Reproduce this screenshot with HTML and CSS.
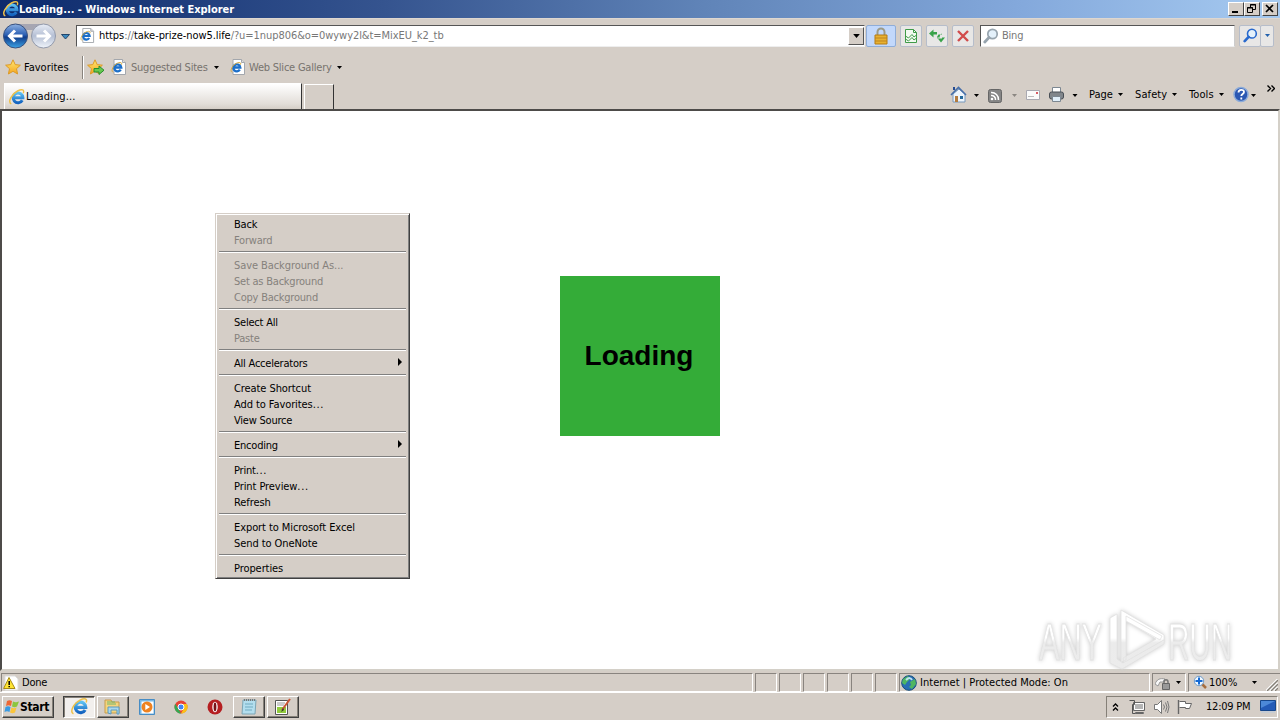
FILE: index.html
```html
<!DOCTYPE html>
<html lang="en">
<head>
<meta charset="utf-8">
<title>Loading... - Windows Internet Explorer</title>
<link rel="stylesheet" href="styles.css">
</head>
<body>
<svg class="sprite" width="0" height="0">
  <defs>
    <linearGradient id="blueBall" x1="0" y1="0" x2="0" y2="1"><stop offset="0" stop-color="#8fb2e2"/><stop offset=".45" stop-color="#2c60b4"/><stop offset=".55" stop-color="#103d8c"/><stop offset="1" stop-color="#3ca4e6"/></linearGradient>
    <linearGradient id="greyBall" x1="0" y1="0" x2="0" y2="1"><stop offset="0" stop-color="#e8edf6"/><stop offset=".5" stop-color="#b5bfd4"/><stop offset="1" stop-color="#f1f5fb"/></linearGradient>
    <linearGradient id="eBlue" x1="0" y1="0" x2="0" y2="1"><stop offset="0" stop-color="#5cc0f2"/><stop offset="1" stop-color="#1463c0"/></linearGradient>
    <linearGradient id="gold" x1="0" y1="0" x2="0" y2="1"><stop offset="0" stop-color="#ffe873"/><stop offset="1" stop-color="#f5a51d"/></linearGradient>
    <linearGradient id="mark" gradientUnits="userSpaceOnUse" x1="0" y1="612" x2="0" y2="670"><stop offset=".45" stop-color="#fff"/><stop offset=".53" stop-color="#ebebeb"/><stop offset="1" stop-color="#ececec"/></linearGradient>
  </defs>
  <symbol id="ie" viewBox="0 0 16 16">
    <path d="M13.300 11.200A4.900 4.900 0 1 1 13.900 8.800H5.500" fill="none" stroke="url(#eBlue)" stroke-width="3"/>
    <path d="M2.300 15C-1.500 13 2.500 5 8.500 2c4.500-2.200 7.300-1.300 5.700 2.200" fill="none" stroke="#edc04a" stroke-width="1.400"/>
  </symbol>
  <symbol id="iepage" viewBox="0 0 16 16">
    <path d="M3 .5h8.500l3 3v12H3z" fill="#fff" stroke="#a3a7ad"/><path d="M11.500.5v3h3" fill="#ddd" stroke="#a3a7ad"/>
    <path d="M9.800 10.700A3.500 3.500 0 1 1 10.300 8.500H4.500" fill="none" stroke="#1c6fc9" stroke-width="2.300"/>
    <path d="M2 13.300C-.5 11.500 2.500 6 6.500 4.200c3-1.200 5-.8 4 1.500" fill="none" stroke="#d8a93c"/>
  </symbol>
  <symbol id="star" viewBox="0 0 16 16"><path d="M8 .8l2.200 4.800 5.200.6-3.900 3.500 1.100 5.300L8 12.300 3.400 15l1.100-5.300L.6 6.200l5.200-.6z" fill="url(#gold)" stroke="#dc9a28"/></symbol>
  <symbol id="glass" viewBox="0 0 16 16"><circle cx="9.500" cy="6" r="4.700" fill="#e4f1fb" stroke="currentColor" stroke-width="1.700"/><path d="M6 9.500L1.800 14" stroke="currentColor" stroke-width="2.800" stroke-linecap="round"/></symbol>
  <symbol id="down" viewBox="0 0 5 3"><path d="M0 0h5L2.500 3z" fill="currentColor"/></symbol>
</svg>

<header class="titlebar">
  <svg class="i16"><use href="#ie"/></svg><span class="title">Loading... - Windows Internet Explorer</span>
  <div class="winbtns">
    <span class="wb"><svg width="14" height="12"><path d="M3 9h6" stroke="#000" stroke-width="2"/></svg></span>
    <span class="wb"><svg width="14" height="12"><path d="M5.500 4V1.500h5v5H8M5 2h6M2.500 4.500h5v5h-5zM2 5h6" fill="none" stroke="#000"/></svg></span>
    <span class="wb last"><svg width="14" height="12"><path d="M3 2l7 7M10 2L3 9" stroke="#000" stroke-width="1.700"/></svg></span>
  </div>
</header>

<nav class="navrow">
  <svg class="travel" width="76" height="34" viewBox="0 18 76 34">
    <path d="M12 23h34l7 4-6 2H12z" fill="#a6a6b2"/>
    <circle cx="15.500" cy="35" r="12" fill="url(#blueBall)" stroke="#38517f"/><circle cx="43.500" cy="35" r="12" fill="url(#greyBall)" stroke="#9299aa"/>
    <path d="M22.500 35H10M15 29.500L9.500 35l5.500 5.500" fill="none" stroke="#fff" stroke-width="3"/>
    <path d="M36.500 35H49M44 29.500L49.500 35 44 40.500" fill="none" stroke="#fff" stroke-width="3"/>
    <path d="M61.500 33.500h8l-4 4.500z" fill="#3b8ac0" stroke="#23466c"/>
  </svg>
  <div class="address"><svg class="i15"><use href="#iepage"/></svg><span class="url">https<i>://</i>take-prize-now5.life<i>/?u=1nup806&amp;o=0wywy2l&amp;t=MixEU_k2_tb</i></span><span class="combo"><svg width="7" height="4"><use href="#down"/></svg></span></div>
  <span class="tool lock"><svg width="16" height="18" viewBox="0 0 16 18"><path d="M4.500 9V5a3.500 3.500 0 0 1 7 0v4" fill="none" stroke="#9c9a87" stroke-width="2"/><path d="M2 8h12v9H2z" fill="#e8b131" stroke="#b57b13"/><path d="M2 11h12M2 14h12" stroke="#bd8420"/></svg></span>
  <span class="tool"><svg width="14" height="16" viewBox="0 0 14 16"><path d="M1.500 14.500v-13h8l3 3v10z" fill="#f2faf1" stroke="#3f9b48"/><path d="M9.500 1.500v3h3M1.500 8l3 2L8 6.500l2 2.500 2.500-2M1.500 11l3 2L8 9.500l2 2.500 2.500-2" fill="none" stroke="#3f9b48"/></svg></span>
  <span class="tool"><svg width="16" height="16" viewBox="0 0 16 16"><path d="M0 5.500L4.500 1.500V4H8v2.500H4.500v3zM16 10.500h-3V6.500H9.500L8 9v1.500h0M16 9.500L12 14.500 8 9.500h2.700c0-2 .3-3 2.300-4v4z" fill="#39a34a"/></svg></span>
  <span class="tool"><svg width="14" height="14" viewBox="0 0 14 14"><path d="M2 2l10 10M12 2L2 12" stroke="#d14b4b" stroke-width="2.400"/></svg></span>
  <div class="search"><svg class="i16 lens"><use href="#glass"/></svg><span>Bing</span></div>
  <span class="tool go"><svg class="i15"><use href="#glass"/></svg></span><span class="tool godrop"><svg width="5" height="3"><use href="#down"/></svg></span>
</nav>

<div class="favrow">
  <svg class="i16"><use href="#star"/></svg><span class="favlabel">Favorites</span><i class="vline"></i>
  <svg class="addfav" width="18" height="17" viewBox="0 0 18 17"><use href="#star" width="16" height="16"/><path d="M7 9.500h5V7l5 4.200-5 4.300V13H7z" fill="#67c84f" stroke="#278d2c"/></svg>
  <svg class="i16 pg1"><use href="#iepage"/></svg><span class="sug">Suggested Sites</span><svg class="arr"><use href="#down"/></svg>
  <svg class="i16 pg2"><use href="#iepage"/></svg><span class="web">Web Slice Gallery</span><svg class="arr"><use href="#down"/></svg>
</div>

<div class="tabrow">
  <div class="tab"><svg class="i16"><use href="#ie"/></svg><span>Loading...</span></div><div class="newtab"></div>
  <div class="commands">
    <svg width="38" height="18" viewBox="0 0 38 18"><path d="M3 8v8h12V8L9 3z" fill="#eef5fc" stroke="#7898bc"/><path d="M1 9l7.500-7.500L16 9" fill="none" stroke="#476fa9" stroke-width="1.600"/><path d="M3 1h2v3H3z" fill="#254b91"/><path d="M5 10h3v6H5z" fill="#b57c3e"/><path d="M10 10h3v3h-3z" fill="#24699c"/><path d="M24 8h5l-2.500 3z"/></svg>
    <svg class="feed" width="38" height="18" viewBox="0 0 38 18"><rect x=".5" y="3.500" width="13" height="13" rx="2" fill="#858585" stroke="#666"/><circle cx="4" cy="13" r="1.300" fill="#fff"/><path d="M3 9.500a4 4 0 0 1 4.500 4.500M3 6.500a7 7 0 0 1 7.500 7.500" fill="none" stroke="#fff" stroke-width="1.500"/><path d="M24 8h5l-2.500 3z" fill="#8b8782"/></svg>
    <svg class="mail" width="17" height="18" viewBox="0 0 17 18"><path d="M1.500 4.500h13v9h-13z" fill="#fafafa" stroke="#a9a9b1"/><path d="M3 10.500h6" stroke="#bbb"/><path d="M11 6h2v2h-2z" fill="#d65b63"/></svg>
    <svg class="printer" width="32" height="18" viewBox="0 0 32 18"><path d="M4.500 7V1.500h8V7" fill="#fff" stroke="#7c8791"/><rect x="1.500" y="6" width="14" height="7" rx="2" fill="#81868b" stroke="#494f56"/><path d="M4.500 10.500h8v5h-8z" fill="#e1effa" stroke="#7c8791"/><path d="M24.500 8h5L27 11z"/></svg>
    <span class="page">Page</span><svg class="arr"><use href="#down"/></svg><span class="safety">Safety</span><svg class="arr"><use href="#down"/></svg><span class="tools">Tools</span><svg class="arr"><use href="#down"/></svg>
    <svg class="help" width="24" height="17" viewBox="0 0 24 17"><circle cx="8" cy="8.500" r="7" fill="#2b58b3" stroke="#8cabd9" stroke-width="1.500"/><path d="M5.500 6.500c0-3.500 5.500-3.500 5.500-.5C11 8 8.300 8 8.300 10M8.300 11.500v2" fill="none" stroke="#fff" stroke-width="1.800"/><path d="M18 8h5l-2.500 3z"/></svg>
    <svg class="more" width="8" height="7" viewBox="0 0 8 7"><path d="M.5.500l3 3-3 3M4.500.500l3 3-3 3" fill="none" stroke="#000" stroke-width="1.400"/></svg>
  </div>
</div>

<main class="viewport">
  <div class="loader">Loading</div>
  <svg class="watermark" width="220" height="68" viewBox="1030 604 220 68">
    <g fill="url(#mark)" stroke="#e2e2e2" stroke-width=".8">
      <text x="1039" y="660" textLength="63" lengthAdjust="spacingAndGlyphs">ANY</text>
      <text x="1168" y="660" textLength="64" lengthAdjust="spacingAndGlyphs">RUN</text>
      <path d="M1121 610l43 25v5l-40 23-1-5 33-19-30-18v39l-5 2z"/>
      <path d="M1110 618l7-4v45l6 4 41-23v4l-42 25-12-6z"/>
      <path d="M1126 616l36 20-2 4-34-19z"/>
    </g>
  </svg>
</main>

<div class="menu">
  <div>Back</div><div class="off">Forward</div><hr>
  <div class="off wide">Save Background As...</div><div class="off">Set as Background</div><div class="off">Copy Background</div><hr>
  <div>Select All</div><div class="off">Paste</div><hr>
  <div class="sub">All Accelerators</div><hr>
  <div class="wide">Create Shortcut</div><div class="wide">Add to Favorites<b>...</b></div><div>View Source</div><hr>
  <div class="sub">Encoding</div><hr>
  <div>Print<b>...</b></div><div class="wide">Print Preview<b>...</b></div><div class="wide">Refresh</div><hr>
  <div class="wide">Export to Microsoft Excel</div><div class="wide">Send to OneNote</div><hr>
  <div class="wide">Properties</div>
</div>

<footer class="status">
  <div class="pane done"><svg width="16" height="16" viewBox="0 0 16 16"><path d="M2 1h10l3 3v11H2z" fill="#fff" stroke="#ddd"/><path d="M6 2.500l6 11H.6z" fill="#ffe533" stroke="#a88b16"/><path d="M6.200 6v4M6.200 11v1.300" stroke="#000" stroke-width="1.500"/></svg><span>Done</span></div>
  <div class="pane"></div><div class="pane"></div><div class="pane"></div><div class="pane"></div><div class="pane"></div><div class="pane"></div>
  <div class="pane zone"><svg width="16" height="16" viewBox="0 0 16 16"><circle cx="8" cy="8" r="7.300" fill="#286eb4" stroke="#174d7a"/><path d="M2 4l5-3 2 3-3 3-2 3-3-2zM9 7l5-3 1 5-4 5-3-2 2-2z" fill="#4eb661"/><path d="M5 5c3-3 5-2 6 0" stroke="#bbe2f2" stroke-width="2" fill="none"/></svg><span>Internet | Protected Mode: On</span></div>
  <div class="pane priv"><svg width="16" height="16" viewBox="0 0 16 16"><path d="M0 9c2-5 5-6 10-5L8 7H5l-2 4z" fill="#f8f8f8" stroke="#999"/><path d="M9 9V7c0-3 4-3 4 0v2" fill="none" stroke="#777" stroke-width="1.500"/><path d="M7.500 8.500h7v6h-7z" fill="#999" stroke="#666"/></svg><svg class="arr"><use href="#down"/></svg></div>
  <div class="pane zoom"><svg width="15" height="15" viewBox="0 0 15 15"><path d="M9 9l4 4" stroke="#a76d3d" stroke-width="2.500"/><circle cx="6" cy="6" r="4.700" fill="#f0f8ff" stroke="#6f9cca"/><path d="M6 2.500v7M2.500 6h7" stroke="#1469d4" stroke-width="2"/></svg><span>100%</span><svg class="arr"><use href="#down"/></svg><svg class="grip" width="12" height="12"><path d="M0 12L12 0M4 12l8-8M8 12l4-4" stroke="#fff" stroke-width="2"/><path d="M1 12L12 1M5 12l7-7M9 12l3-3" stroke="#858078" stroke-width="1.300"/></svg></div>
</footer>

<div class="taskbar">
  <div class="start"><svg width="16" height="16" viewBox="0 0 16 16"><path d="M3 2c2-1 3-1 5 0L7 7C5 6 4 6 2 7z" fill="#ef6835"/><path d="M9 2.500c2 1 3 1 6 0l-2 5c-2 1-3 1-5 0z" fill="#8cc63d"/><path d="M1.500 8c2-1 3-1 5 0l-1 5c-2-1-3-1-5 0z" fill="#3a9be3"/><path d="M7.500 8.500c2 1 3 1 5 0l-1.500 5c-2 1-3 1-5 0z" fill="#fbc53b"/></svg><span>Start</span></div>
  <div class="task active"><svg width="17" height="17"><use href="#ie"/></svg></div>
  <div class="task"><svg width="20" height="18" viewBox="0 0 20 18"><path d="M2 2h6l1 2h7v11H2z" fill="#f4d47d" stroke="#c79c4c"/><path d="M4 4h8M4 6h9" stroke="#72b66f"/><path d="M5 15V9h11v7h-2v-4H8v4z" fill="#a9d7ef" stroke="#5b9bc1"/></svg></div>
  <div class="quick"><svg width="16" height="16" viewBox="0 0 16 16"><path d="M.5.500h15v15H.5z" fill="#78b8e6" stroke="#478cc4"/><path d="M2.500 2.500h12v12h-12z" fill="#fff"/><circle cx="8" cy="8" r="5.500" fill="#ee8221"/><path d="M6.300 5v6L11 8z" fill="#fff"/></svg></div>
  <div class="quick"><svg width="14" height="14" viewBox="0 0 14 14"><circle cx="7" cy="7" r="6.500" fill="#e84335"/><path d="M1.300 3.800L5 10l2 3.500A6.500 6.500 0 0 1 1.300 3.800z" fill="#34a853"/><path d="M7 4h5.900A6.500 6.500 0 0 1 7 13.500L10 8z" fill="#fbc116"/><circle cx="7" cy="7" r="3" fill="#4285f4" stroke="#fff"/></svg></div>
  <div class="quick"><svg width="16" height="16" viewBox="0 0 16 16"><circle cx="8" cy="8" r="7.500" fill="#b51e20"/><ellipse cx="8" cy="8" rx="2.700" ry="5.300" fill="#fff"/><ellipse cx="8" cy="8" rx="1.400" ry="4.400" fill="#781216"/></svg></div>
  <div class="task"><svg width="16" height="18" viewBox="0 0 16 18"><path d="M2 2h13l-1 14H1z" fill="#b3deee" stroke="#7ca5b5"/><path d="M3 2h11" stroke="#777" stroke-width="2" stroke-dasharray="1"/><path d="M4 6h8M4 9h8M4 12h7" stroke="#70abc1"/></svg></div>
  <div class="task"><svg width="18" height="18" viewBox="0 0 18 18"><path d="M1.500 2.500h12v14h-12z" fill="#fff" stroke="#555"/><path d="M3 9h9v6H3z" fill="#91cb3d"/><path d="M3 5h8M3 7h7" stroke="#999"/><path d="M16 1L8 12" stroke="#ca5535" stroke-width="2"/><path d="M9 10l-2 4 3-2" fill="#333"/></svg></div>
  <div class="tray">
    <svg class="chev" width="7" height="8" viewBox="0 0 7 8"><path d="M1 3.500L3.500 1 6 3.500M1 7.500L3.500 5 6 7.500" fill="none" stroke="#000" stroke-width="1.300"/></svg>
    <svg class="net" width="16" height="16" viewBox="0 0 16 16"><path d="M4.500 3.500h11v8h-11z" fill="#b5b5b5" stroke="#666"/><path d="M5.500 4.500h9v6h-9z" fill="none" stroke="#fff"/><path d="M6.500 13.500h8v1h-8z" fill="#fff" stroke="#666"/><path d="M.5 1.500h5v4h-2v9h3" fill="none" stroke="#555"/></svg>
    <svg class="sound" width="17" height="16" viewBox="0 0 17 16"><path d="M1.500 5.500h3l4-4v13l-4-4h-3z" fill="#fff" stroke="#777"/><path d="M10.500 5.500q2 2.500 0 5M12.500 3.500q3 4.500 0 9M14.500 2q3 6 0 12" fill="none" stroke="#777"/></svg>
    <svg class="flag" width="16" height="16" viewBox="0 0 16 16"><path d="M2.500 2.500h6v2h6l-2 5h-4v-1h-6" fill="#fff" stroke="#666"/><path d="M1.500 1v14" stroke="#666" stroke-width="1.400"/></svg>
    <time>12:09 PM</time><svg class="desktop" width="16" height="13" viewBox="0 0 16 13"><path d="M.5.500h15v10H.5z" fill="#245bb7" stroke="#17478b"/><path d="M1 1h14L1 8z" fill="#4d89d8"/><path d="M1 12h14" stroke="#b8c9de"/></svg>
  </div>
</div>
</body>
</html>
```
FILE: styles.css
```css
* { box-sizing: border-box; }
body { margin: 0; width: 1280px; height: 720px; overflow: hidden; display: flex; flex-direction: column; background: #d5cec7; font: 11px/16px "DejaVu Sans Condensed", "DejaVu Sans", sans-serif; font-stretch: condensed; letter-spacing: -.22px; color: #000; position: relative; }
svg { display: block; flex: none; }
span { white-space: nowrap; }
.sprite { position: absolute; }
.i16 { width: 16px; height: 16px; }
.i15 { width: 15px; height: 15px; }
.arr { width: 5px; height: 3px; }
.titlebar { height: 18px; flex: none; display: flex; align-items: center; padding-left: 3px; background: linear-gradient(90deg, #0c2a6c, #35548f 30%, #6084b8 55%, #84a9dc 80%, #a6caf0); }
.title { color: #fff; font-weight: bold; letter-spacing: -.03px; padding-top: 1px; }
.winbtns { margin-left: auto; display: flex; padding-right: 2px; }
.wb { width: 16px; height: 14px; background: #d5cec7; border: 1px solid; border-color: #fff #444 #444 #fff; }
.wb.last { margin-left: 2px; }
.navrow { height: 34px; flex: none; display: flex; align-items: center; border-top: 1px solid #ded7d0; }
.address { width: 789px; height: 22px; border: 1px solid; border-color: #555 #eee #eee #555; background: #fff; display: flex; align-items: center; padding-left: 3px; }
.url { margin-left: 4px; letter-spacing: -.06px; padding-top: 1px; }
.url i { font-style: normal; color: #777; }
.combo { width: 16px; height: 18px; margin-left: auto; background: #d5cec7; border: 1px solid; border-color: #fff #555 #555 #fff; display: flex; align-items: center; justify-content: center; }
.tool { width: 22px; height: 22px; margin-left: 4px; background: #e8e7e6; border: 1px solid #b6bdca; border-radius: 2px; display: flex; align-items: center; justify-content: center; }
.tool.lock { width: 30px; margin-left: 1px; background: #c2d8fb; border-color: #8fadd8; }
.search { width: 255px; height: 22px; margin-left: 6px; background: #fff; border: 1px solid; border-color: #555 #ccc #eee #555; display: flex; align-items: center; padding-left: 2px; gap: 3px; color: #777; }
.search span { padding-top: 1px; }
.lens { color: #97a4ae; }
.tool.go { width: 22px; color: #2869cd; }
.tool.godrop { width: 14px; margin-left: -1px; color: #2261ad; }
.favrow { height: 30px; flex: none; display: flex; align-items: center; padding-left: 5px; color: #77736e; }
.favrow span { padding-top: 1px; }
.favrow svg { color: #000; }
.favlabel { width: 58px; margin-left: 3px; color: #000; letter-spacing: 0; }
.vline { width: 2px; height: 23px; border-left: 1px solid #88837d; border-right: 1px solid #fff; }
.addfav { margin-left: 3px; }
.pg1 { margin-left: 6px; }
.sug { width: 79px; margin-left: 4px; margin-right: 4px; }
.pg2 { margin-left: 11px; }
.web { width: 84px; margin: 0 4px 0 3px; }
.tabrow { height: 27px; flex: none; display: flex; padding-left: 4px; }
.tab { width: 298px; margin-top: 1px; border: 1px solid #fff; border-right: 1px solid #333; border-bottom: 0; background: linear-gradient(#fff, #e2ddd8 80%, #d5cec7); display: flex; align-items: center; padding-left: 4px; }
.tab span { letter-spacing: .1px; margin-left: 1px; }
.newtab { width: 30px; margin: 2px 0 0 2px; border: 1px solid #fff; border-right: 1px solid #333; border-bottom: 0; }
.commands { width: 330px; margin-left: auto; height: 25px; display: flex; align-items: center; }
.mail { margin-left: -1px; }
.printer { margin-left: 6px; }
.page { width: 26px; margin: 0 3px 0 9px; letter-spacing: 0; }
.safety { width: 34px; margin: 0 3px 0 12px; letter-spacing: .1px; }
.tools { width: 27px; margin: 0 3px 0 12px; letter-spacing: .1px; }
.help { margin-left: 9px; }
.more { margin: -12px 0 0 10px; }
.viewport { height: 562px; flex: none; background: #fff; border: solid; border-width: 2px 2px 2px 2px; border-color: #4d4b49 #d4d0c8 #d4d0c8 #4d4b49; padding: 165px 0 0 558px; position: relative; }
.loader { width: 160px; height: 160px; background: #34ac38; display: flex; align-items: center; justify-content: center; font: bold 28px/32px "Liberation Sans", Arial, sans-serif; letter-spacing: 0; padding-right: 2px; }
.watermark { position: absolute; left: 1028px; top: 493px; filter: drop-shadow(0 0 2px #ccc); }
.watermark text { font: 52px "Liberation Sans", Arial, sans-serif; }
.menu { position: absolute; left: 215px; top: 213px; width: 195px; height: 366px; background: #d5cec7; border: 1px solid; border-color: #d5cec7 #404040 #404040 #d5cec7; box-shadow: inset 1px 1px #fff, inset -1px -1px #808080; padding: 2px; }
.menu div { height: 16px; padding-left: 16px; white-space: nowrap; line-height: 18px; }
.menu .wide { letter-spacing: -.08px; }
.menu b { font-weight: normal; letter-spacing: .7px; }
.menu .off { color: #85817c; }
.menu .sub { display: flex; justify-content: space-between; padding-right: 5px; }
.menu .sub::after { content: ""; width: 0; height: 0; border-left: 4px solid #000; border-top: 4px solid transparent; border-bottom: 4px solid transparent; margin-top: 3px; }
.menu hr { height: 2px; margin: 3px 1px 4px; border: 0; border-top: 1px solid #808080; border-bottom: 1px solid #fff; }
.status { height: 22px; flex: none; display: flex; gap: 2px; padding: 2px 0 1px 1px; border-bottom: 1px solid #fff; }
.pane { width: 22px; height: 19px; border: 1px solid; border-color: #89847f #fff #fff #89847f; display: flex; align-items: center; padding-left: 1px; }
.pane span { padding-top: 1px; }
.done { width: 752px; gap: 3px; }
.zone { width: 251px; gap: 3px; letter-spacing: .04px; }
.priv { width: 34px; padding-left: 2px; gap: 5px; }
.zoom { width: 92px; padding-left: 4px; border-right: 0; letter-spacing: 0; }
.zoom span { width: 42px; margin-left: 1px; margin-right: 1px; }
.grip { margin: 5px 0 0 9px; }
.taskbar { flex: 1; display: flex; align-items: center; padding-left: 2px; }
.start { width: 52px; height: 22px; margin-right: 9px; border: 1px solid; border-color: #fff #404040 #404040 #fff; box-shadow: inset -1px -1px #858078; display: flex; align-items: center; padding-left: 1px; font-weight: bold; font-size: 12px; letter-spacing: -.3px; }
.task { width: 32px; height: 22px; margin-right: 2px; border: 1px solid; border-color: #fff #404040 #404040 #fff; box-shadow: inset -1px -1px #858078; display: flex; align-items: center; justify-content: center; }
.active { background: #f2efed; border-color: #404040 #fff #fff #404040; box-shadow: inset 1px 1px #858078; }
.quick { width: 34px; display: flex; justify-content: center; padding-right: 2px; }
.tray { width: 172px; height: 22px; margin: 0 2px 0 auto; border: 1px solid; border-color: #858078 #fff #fff #858078; display: flex; align-items: center; }
.chev { margin-left: 5px; }
.net { margin-left: 10px; }
.sound { margin-left: 8px; }
.flag { margin-left: 7px; }
.tray time { width: 46px; margin-left: 13px; white-space: nowrap; padding-top: 1px; }
.desktop { margin-left: 8px; }
```
